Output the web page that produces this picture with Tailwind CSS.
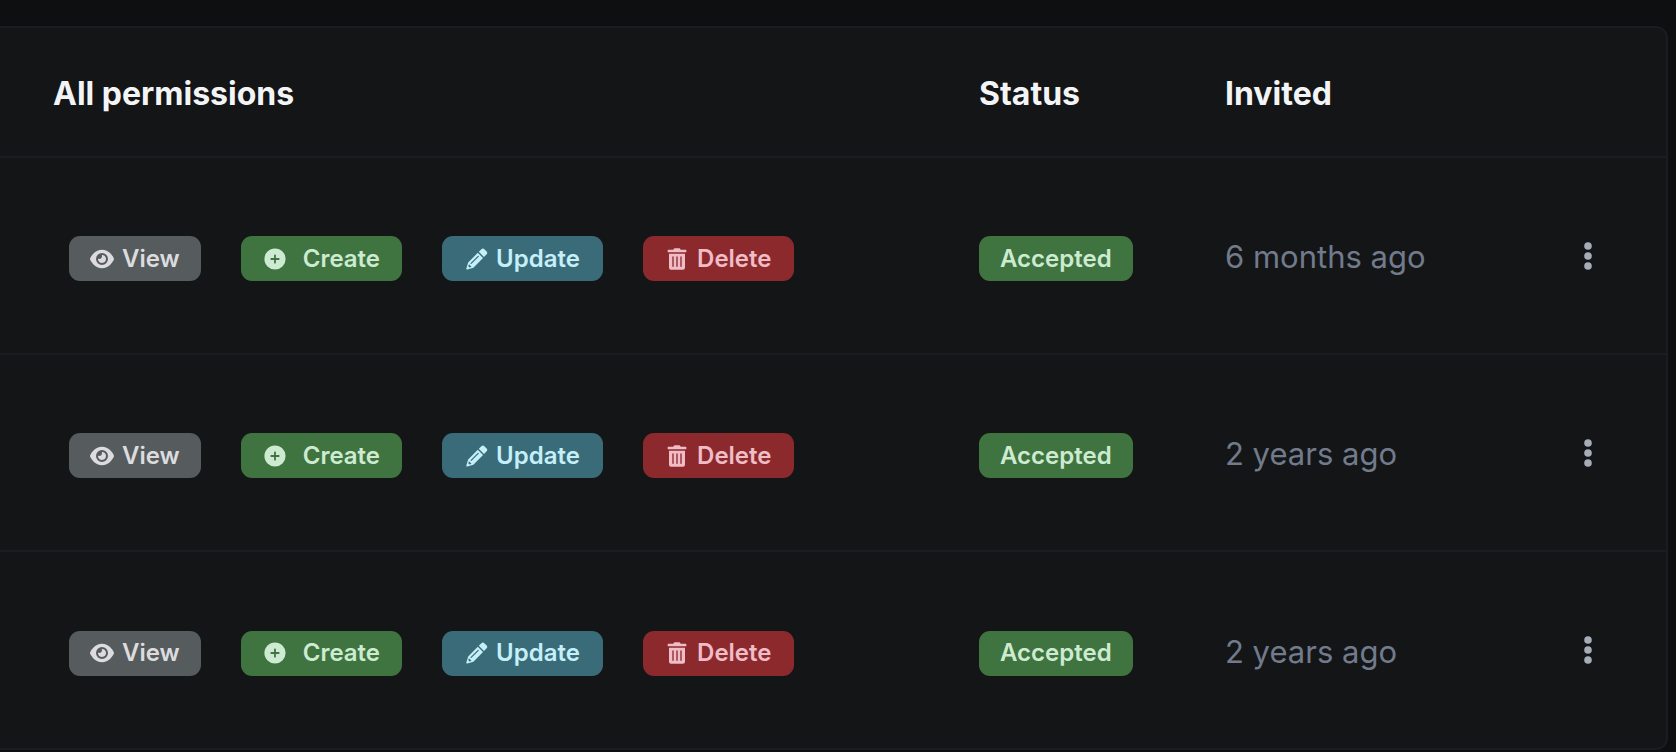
<!DOCTYPE html>
<html lang="en">

<head>
    <meta charset="UTF-8">
    <meta name="viewport" content="width=device-width, initial-scale=1.0">
    <title>Permissions</title>
    <script src="https://cdn.jsdelivr.net/npm/@tailwindcss/browser@4"></script>
</head>

<body class="bg-[#0e0f11] font-['Inter',sans-serif]">
    <!-- Icons shared by all rows -->
    <svg class="hidden" aria-hidden="true">
        <symbol id="icon-eye" viewBox="0 0 576 512">
            <path d="M288 32c-80.8 0-145.5 36.8-192.6 80.6C48.6 156 17.3 208 2.5 243.7c-3.3 7.9-3.3 16.7 0 24.6C17.3 304 48.6 356 95.4 399.4C142.5 443.2 207.2 480 288 480s145.5-36.8 192.6-80.6c46.8-43.5 78.1-95.4 93-131.1c3.3-7.9 3.3-16.7 0-24.6c-14.9-35.7-46.2-87.7-93-131.1C433.5 68.8 368.8 32 288 32zM144 256a144 144 0 1 1 288 0 144 144 0 1 1 -288 0zm144-64c0 35.3-28.7 64-64 64c-7.1 0-13.9-1.2-20.3-3.3c-5.5-1.8-11.9 1.6-11.7 7.4c.3 6.9 1.3 13.8 3.2 20.7c13.7 51.2 66.4 81.6 117.6 67.9s81.6-66.4 67.9-117.6c-11.1-41.5-47.8-69.4-88.6-71.1c-5.8-.2-9.2 6.1-7.4 11.7c2.1 6.4 3.3 13.2 3.3 20.3z" />
        </symbol>
        <symbol id="icon-plus" viewBox="0 0 24 24">
            <path fill-rule="evenodd" d="M12 1.4a10.6 10.6 0 1 0 0 21.2a10.6 10.6 0 1 0 0-21.2zM11.1 8.3a.9.9 0 0 1 1.8 0v2.8h2.8a.9.9 0 0 1 0 1.8h-2.8v2.8a.9.9 0 0 1-1.8 0v-2.8H8.3a.9.9 0 0 1 0-1.8h2.8z" />
        </symbol>
        <symbol id="icon-pencil" viewBox="0 0 24 24">
            <g transform="translate(2.4 22.4) rotate(-45)">
                <path fill-rule="evenodd" d="M.6-.7L6.2-3.7H19.8V3.7H6.2L.6.7A.8.8 0 0 1 .6-.7zM7.6-1.5A.6.6 0 0 0 7.6-.3H17.6A.6.6 0 0 0 17.6-1.5zM3.6-.9L5.4-1.8V1.8L3.6.9z" />
                <path d="M21.2-3.7H24.6A2.4 2.4 0 0 1 27-1.3V1.3A2.4 2.4 0 0 1 24.6 3.7H21.2z" />
            </g>
        </symbol>
        <symbol id="icon-trash" viewBox="-32 -32 512 576">
            <path d="M32 464a48 48 0 0 0 48 48h288a48 48 0 0 0 48-48V128H32zm272-256a16 16 0 0 1 32 0v224a16 16 0 0 1-32 0zm-96 0a16 16 0 0 1 32 0v224a16 16 0 0 1-32 0zm-96 0a16 16 0 0 1 32 0v224a16 16 0 0 1-32 0zM432 32H312l-9.4-18.7A24 24 0 0 0 281.1 0H166.8a23.7 23.7 0 0 0-21.4 13.3L136 32H16A16 16 0 0 0 0 48v32a16 16 0 0 0 16 16h416a16 16 0 0 0 16-16V48a16 16 0 0 0-16-16z" />
        </symbol>
        <symbol id="icon-dots" viewBox="0 0 8 28">
            <circle cx="4" cy="4" r="3.8" />
            <circle cx="4" cy="14" r="3.8" />
            <circle cx="4" cy="24" r="3.8" />
        </symbol>
    </svg>

    <main class="pt-[26px] pr-2 pb-[2px]">
        <div class="rounded-r-xl border-2 border-l-0 border-[#1b1c1f] bg-[#141517] overflow-hidden">
            <table class="w-full table-fixed text-left">
                <thead>
                    <tr class="h-[129px] border-b-2 border-[#1b1c1f] text-[32px] text-[#f3f4f6]">
                        <th class="pt-1 pl-[53px] font-bold">All permissions</th>
                        <th class="w-[246px] pt-1 font-bold">Status</th>
                        <th class="w-[320px] pt-1 font-bold">Invited</th>
                        <th class="w-[121px]" aria-label="Actions"></th>
                    </tr>
                </thead>
                <tbody id="permission-rows"></tbody>
            </table>
        </div>
    </main>

    <template id="permission-row">
        <tr class="h-[197px] border-b-2 border-[#1b1c1f] last:border-b-0">
            <td class="pt-[6px] pl-[69px]">
                <div class="flex gap-10 text-2xl font-semibold">
                    <span class="flex h-[45px] items-center gap-2 rounded-[11px] bg-[#565b5e] px-[21px] text-[#dcdcde]">
                        <svg class="size-6 fill-current"><use href="#icon-eye" /></svg>View
                    </span>
                    <span class="flex h-[45px] min-w-[161px] items-center gap-4 rounded-[11px] bg-[#3f733f] px-[22px] text-[#cdebd1]">
                        <svg class="size-6 fill-current"><use href="#icon-plus" /></svg>Create
                    </span>
                    <span class="flex h-[45px] min-w-[161px] items-center gap-2 rounded-[11px] bg-[#3a6b78] px-[22px] text-[#c5eff9]">
                        <svg class="size-6 fill-current"><use href="#icon-pencil" /></svg>Update
                    </span>
                    <span class="flex h-[45px] min-w-[151px] items-center gap-2 rounded-[11px] bg-[#8b292c] px-[22px] text-[#f0bcc6]">
                        <svg class="size-6 fill-current"><use href="#icon-trash" /></svg>Delete
                    </span>
                </div>
            </td>
            <td class="pt-[6px]">
                <span class="flex h-[45px] w-fit items-center rounded-[11px] bg-[#3f733f] px-[21px] text-2xl font-semibold text-[#cdebd1]">Accepted</span>
            </td>
            <td class="invited pt-1 text-[31px] text-[#717b8c]"></td>
            <td>
                <button type="button" aria-label="More actions" class="flex h-12 w-[86px] items-center justify-center">
                    <svg class="h-7 w-2 fill-[#a6adb9]"><use href="#icon-dots" /></svg>
                </button>
            </td>
        </tr>
    </template>

    <script>
        const invitedDates = ['6 months ago', '2 years ago', '2 years ago'];
        const rows = document.getElementById('permission-rows');
        const template = document.getElementById('permission-row');

        // Add one row per invited user
        invitedDates.forEach(date => {
            const row = template.content.cloneNode(true);
            row.querySelector('.invited').textContent = date;
            rows.appendChild(row);
        });
    </script>
</body>

</html>
